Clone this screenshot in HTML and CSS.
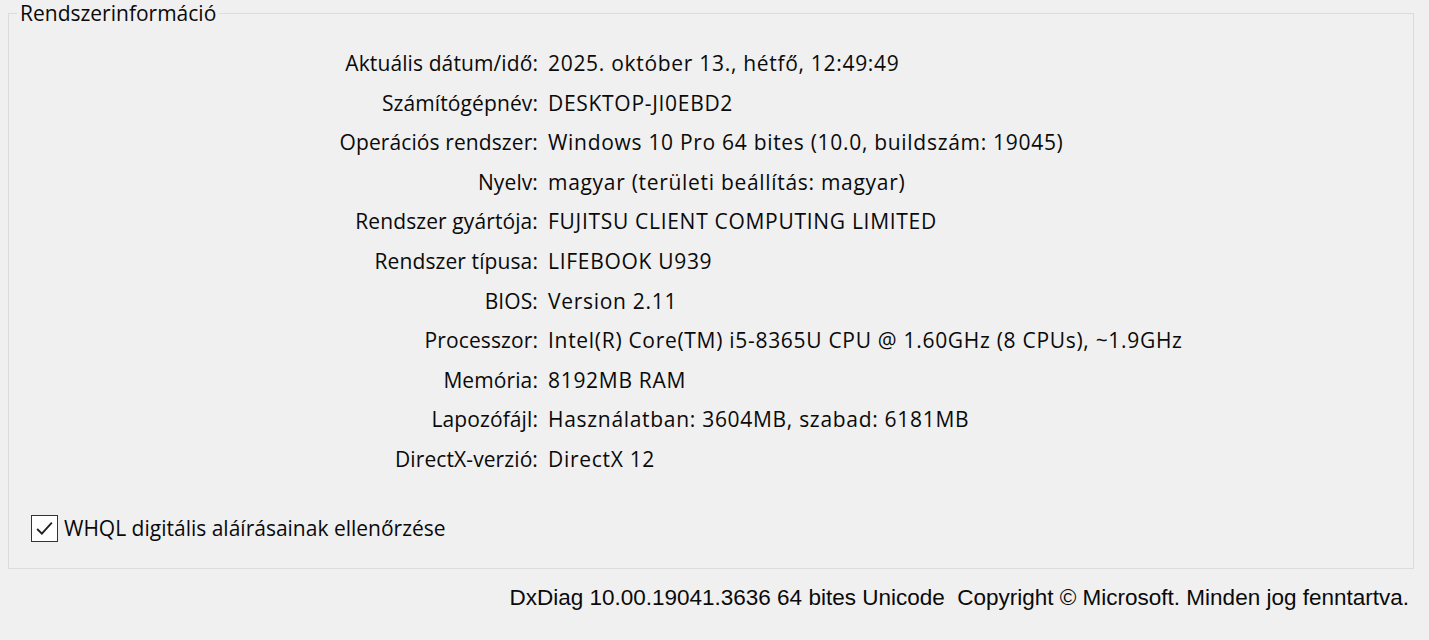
FILE: index.html
```html
<!DOCTYPE html>
<html lang="hu">
<head>
  <meta charset="UTF-8" />
  <title>DirectX diagnosztikai eszköz</title>
  <link rel="stylesheet" href="styles.css">
</head>
<body>
  <!-- Rendszerinformáció csoport -->
  <fieldset class="group">
    <legend>Rendszerinformáció</legend>
    <div class="info">
      <div class="label">Aktuális dátum/idő:</div><div class="value">2025. október 13., hétfő, 12:49:49</div>
      <div class="label">Számítógépnév:</div><div class="value">DESKTOP-JI0EBD2</div>
      <div class="label">Operációs rendszer:</div><div class="value">Windows 10 Pro 64 bites (10.0, buildszám: 19045)</div>
      <div class="label">Nyelv:</div><div class="value">magyar (területi beállítás: magyar)</div>
      <div class="label">Rendszer gyártója:</div><div class="value">FUJITSU CLIENT COMPUTING LIMITED</div>
      <div class="label">Rendszer típusa:</div><div class="value">LIFEBOOK U939</div>
      <div class="label">BIOS:</div><div class="value">Version 2.11</div>
      <div class="label">Processzor:</div><div class="value">Intel(R) Core(TM) i5-8365U CPU @ 1.60GHz (8 CPUs), ~1.9GHz</div>
      <div class="label">Memória:</div><div class="value">8192MB RAM</div>
      <div class="label">Lapozófájl:</div><div class="value">Használatban: 3604MB, szabad: 6181MB</div>
      <div class="label">DirectX-verzió:</div><div class="value">DirectX 12</div>
    </div>
    <label class="check">
      <span class="box">
        <svg width="21" height="21" viewBox="0 0 20 20"><path d="M3 10.5 L7.5 15 L17 4.5" fill="none" stroke="#222" stroke-width="1.8"/></svg>
      </span>
      WHQL digitális aláírásainak ellenőrzése
    </label>
  </fieldset>

  <div class="footer">DxDiag 10.00.19041.3636 64 bites Unicode&nbsp; Copyright © Microsoft. Minden jog fenntartva.</div>
</body>
</html>
```

FILE: styles.css
```css
/* Alap */
body {
  margin: 0;
  background: #f0f0f0;
  color: #0a0a0a;
  font-family: "Open Sans", "Noto Sans", sans-serif;
  font-size: 21px;
}
.group {
  margin: 0 15px 0 8px;
  padding: 18px 0 26px 0;
  border: 1px solid #dcdcdc;
}
.group legend {
  margin-left: 8px;
  padding: 0 3px;
  line-height: 26px;
}
.info {
  display: grid;
  grid-template-columns: 529px 1fr;
  column-gap: 10px;
  line-height: 39.6px;
}
.label { text-align: right; letter-spacing: 0.1px; }
.value { letter-spacing: 0.7px; }
.check {
  display: flex;
  align-items: center;
  gap: 6px;
  margin: 35px 0 0 22px;
  line-height: 27px;
}
.box {
  width: 25px;
  height: 25px;
  border: 1px solid #333;
  background: #fff;
  display: flex;
  align-items: center;
  justify-content: center;
}
.footer {
  text-align: right;
  padding: 16px 20px 0 0;
  font-family: "Liberation Sans", Arial, sans-serif;
  font-size: 22.5px;
}
```
